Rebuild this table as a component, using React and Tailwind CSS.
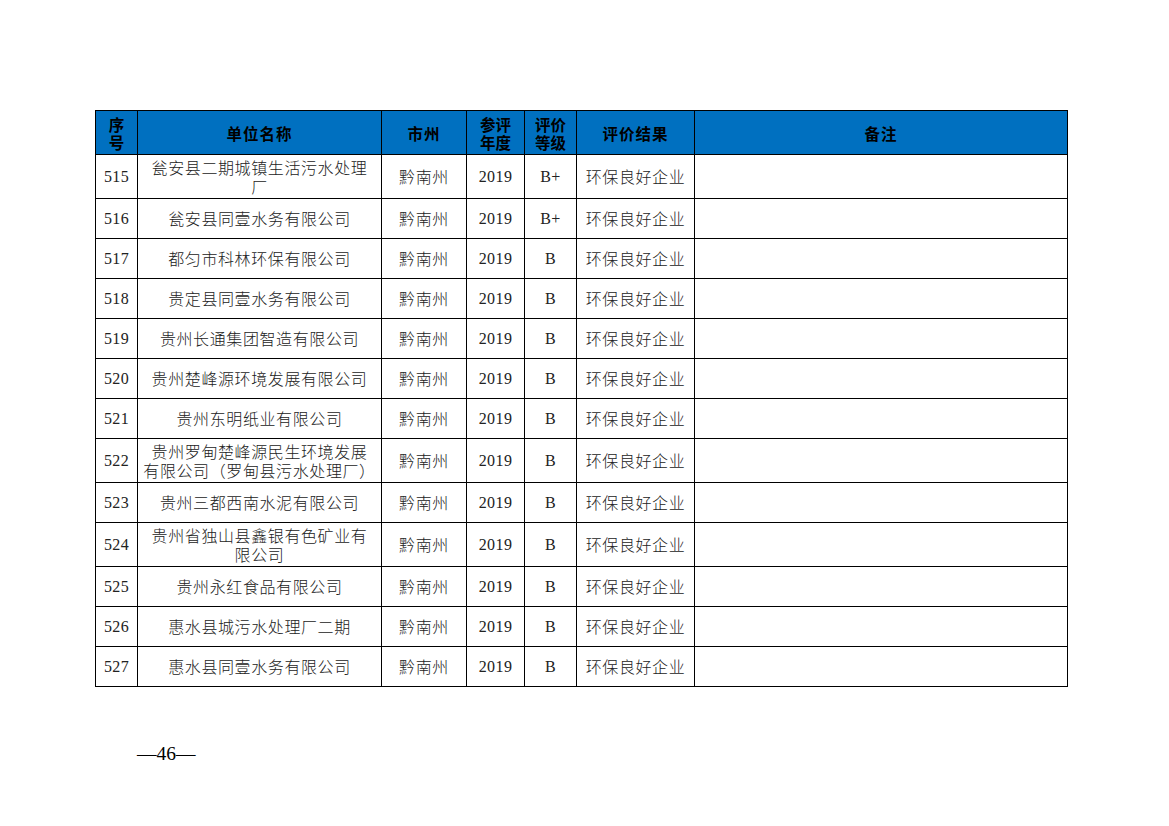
const rows = [
  { no: '515', name: ['瓮安县二期城镇生活污水处理', '厂'], grade: 'B+', h: 'h-[44px]' },
  { no: '516', name: ['瓮安县同壹水务有限公司'], grade: 'B+', h: 'h-[40px]' },
  { no: '517', name: ['都匀市科林环保有限公司'], grade: 'B', h: 'h-[40px]' },
  { no: '518', name: ['贵定县同壹水务有限公司'], grade: 'B', h: 'h-[40px]' },
  { no: '519', name: ['贵州长通集团智造有限公司'], grade: 'B', h: 'h-[40px]' },
  { no: '520', name: ['贵州楚峰源环境发展有限公司'], grade: 'B', h: 'h-[40px]' },
  { no: '521', name: ['贵州东明纸业有限公司'], grade: 'B', h: 'h-[40px]' },
  { no: '522', name: ['贵州罗甸楚峰源民生环境发展', '有限公司（罗甸县污水处理厂）'], grade: 'B', h: 'h-[44px]' },
  { no: '523', name: ['贵州三都西南水泥有限公司'], grade: 'B', h: 'h-[40px]' },
  { no: '524', name: ['贵州省独山县鑫银有色矿业有', '限公司'], grade: 'B', h: 'h-[44px]' },
  { no: '525', name: ['贵州永红食品有限公司'], grade: 'B', h: 'h-[40px]' },
  { no: '526', name: ['惠水县城污水处理厂二期'], grade: 'B', h: 'h-[40px]' },
  { no: '527', name: ['惠水县同壹水务有限公司'], grade: 'B', h: 'h-[40px]' },
];

const serif = "font-['Liberation_Serif','Noto_Sans_CJK_SC',serif] tracking-[0.4px]";
const cjk = "font-['Noto_Sans_CJK_SC',sans-serif] font-light tracking-[0.6px]";
const cell = 'border border-black text-center align-middle p-0';

const App = () => {
  return (
    <div className="w-[1169px] h-[826px] bg-white pt-[110px] pl-[95px] text-[#222]">
      <table className="table-fixed border-collapse w-[972px] border border-[#333]">
        <colgroup>
          <col className="w-[42px]" />
          <col className="w-[244px]" />
          <col className="w-[85px]" />
          <col className="w-[58px]" />
          <col className="w-[52px]" />
          <col className="w-[118px]" />
          <col className="w-[373px]" />
        </colgroup>
        <thead>
          <tr className="h-[44px] bg-[#0070c0] font-['Noto_Sans_CJK_SC',sans-serif] font-bold text-[15.5px] leading-[18px] text-black">
            <th className={cell}>序<br />号</th>
            <th className={cell + ' tracking-[1px]'}>单位名称</th>
            <th className={cell + ' tracking-[1px]'}>市州</th>
            <th className={cell}>参评<br />年度</th>
            <th className={cell}>评价<br />等级</th>
            <th className={cell + ' tracking-[1px]'}>评价结果</th>
            <th className={cell + ' tracking-[1px]'}>备注</th>
          </tr>
        </thead>
        <tbody className="text-[16px] leading-[19px]">
          {rows.map((r) => (
            <tr key={r.no} className={r.h}>
              <td className={cell + ' ' + serif}>{r.no}</td>
              <td className={cell + ' ' + cjk}>
                {r.name.map((line, i) => (
                  <div key={i} className="leading-[19px]">{line}</div>
                ))}
              </td>
              <td className={cell + ' ' + cjk}>黔南州</td>
              <td className={cell + ' ' + serif}>2019</td>
              <td className={cell + ' ' + serif}>{r.grade}</td>
              <td className={cell + ' ' + cjk}>环保良好企业</td>
              <td className={cell}></td>
            </tr>
          ))}
        </tbody>
      </table>
      <div className={"mt-[55px] ml-[42px] text-[19.5px] leading-[24px] text-black font-['Liberation_Serif',serif]"}>
        —46—
      </div>
    </div>
  );
};

export default App;
